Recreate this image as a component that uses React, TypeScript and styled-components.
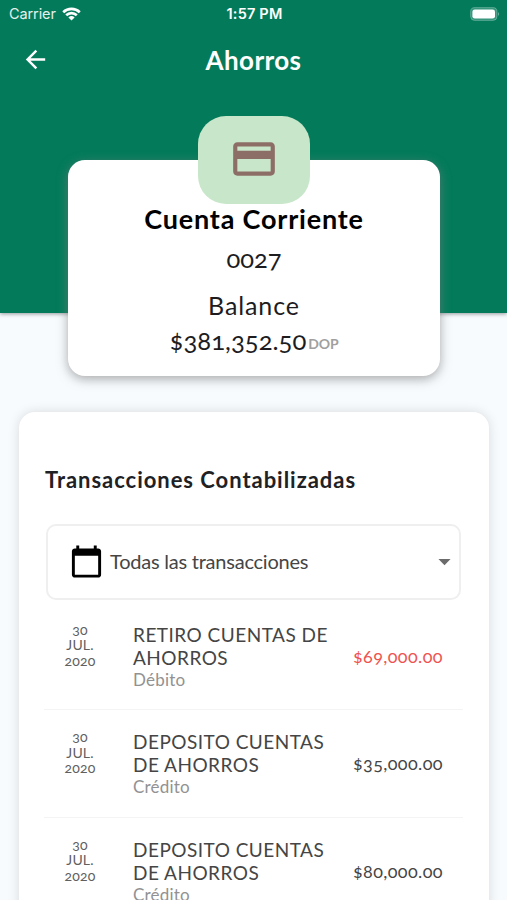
import React from "react";
import styled, { createGlobalStyle } from "styled-components";
import { MdArrowBack, MdArrowDropDown, MdCalendarToday, MdCreditCard } from "react-icons/md";

const GlobalStyle = createGlobalStyle`
  * { box-sizing: border-box; }
  body {
    margin: 0;
    height: 900px;
    overflow: hidden;
    background: #f7fbfe;
    font-family: Lato, "Open Sans", sans-serif;
    font-variant-numeric: oldstyle-nums;
    color: #1d1d1f;
  }
`;

const Screen = styled.main`
  width: 507px;
  height: 900px;
  overflow: hidden;
`;

const Hero = styled.header`
  height: 313px;
  background: #037b5b;
  color: #fff;
  box-shadow: 0 1px 4px rgba(0, 0, 0, 0.4);
`;

const StatusBar = styled.div`
  height: 28px;
  padding: 0 7px 0 9px;
  display: grid;
  grid-template-columns: 1fr auto 1fr;
  align-items: center;
  font: 400 14.5px/28px Inter, sans-serif;
`;

const Carrier = styled.div`
  display: flex;
  align-items: center;
  gap: 6px;
  letter-spacing: -0.1px;
  color: #e3f0ec;
`;

const Clock = styled.div`
  font-weight: 600;
  font-size: 14.5px;
  letter-spacing: 0.2px;
`;

const Battery = styled.svg`
  justify-self: end;
  margin-bottom: 1px;
`;

const AppBar = styled.div`
  height: 63px;
  padding: 0 21px;
  display: grid;
  grid-template-columns: 29px 1fr 29px;
  align-items: center;
`;

const ScreenTitle = styled.h1`
  margin: 0;
  text-align: center;
  font-size: 26px;
  line-height: 32px;
  font-weight: 700;
  letter-spacing: 0.4px;
`;

const AccountCard = styled.section`
  position: relative;
  width: 372px;
  height: 216px;
  margin: -153px 0 0 68px;
  padding-top: 39px;
  border-radius: 17px;
  background: #fff;
  text-align: center;
  box-shadow: 0 3px 11px rgba(125, 125, 125, 0.65);
`;

const Badge = styled.div`
  position: absolute;
  top: -44.5px;
  left: 130px;
  width: 112px;
  height: 88px;
  padding-bottom: 1px;
  border-radius: 28px;
  background: #c8e6c9;
  color: #8d6e67;
  display: flex;
  align-items: center;
  justify-content: center;
`;

const AccountName = styled.h2`
  margin: 0;
  font-size: 27px;
  line-height: 40px;
  font-weight: 700;
  letter-spacing: 0.8px;
  color: #000;
  position: relative;
`;

const AccountNumber = styled.div`
  font-size: 25.5px;
  line-height: 39px;
`;

const BalanceLabel = styled.div`
  margin-top: 9px;
  font-size: 25px;
  line-height: 36px;
  letter-spacing: 0.9px;
`;

const Balance = styled.div`
  font-size: 25.7px;
  line-height: 35px;
`;

const Currency = styled.span`
  position: relative;
  top: -1.5px;
  margin-left: 2px;
  font-size: 14px;
  font-weight: 700;
  letter-spacing: -0.2px;
  color: #a0a0a0;
`;

const Panel = styled.section`
  width: 470px;
  height: 520px;
  margin: 36px 0 0 19px;
  padding: 54px 26px 0 25px;
  border-radius: 16px;
  background: #fff;
  box-shadow: 0 0 12px rgba(0, 0, 0, 0.13);
`;

const PanelTitle = styled.h3`
  margin: 0 0 29.5px 1px;
  font-size: 22px;
  line-height: 28px;
  font-weight: 700;
  letter-spacing: 0.96px;
  white-space: nowrap;
  color: #202124;
`;

const Filter = styled.button`
  width: 415px;
  height: 76px;
  margin: 0 0 3px 2px;
  padding: 0 0 1px 21px;
  display: flex;
  align-items: center;
  border: 2px solid #efefef;
  border-radius: 10px;
  background: #fff;
  color: #000;
  font: 400 20px/28px Lato, sans-serif;
`;

const FilterText = styled.span`
  flex: 1;
  margin-left: 6px;
  text-align: left;
  letter-spacing: -0.23px;
  color: #454545;
`;

const List = styled.ul`
  margin: 0;
  padding: 0;
  list-style: none;
`;

const Row = styled.li`
  height: 107.5px;
  padding: 20px 20px 0 14px;
  display: grid;
  grid-template-columns: 44px 31px 1fr auto;
  border-bottom: 1px solid #f4f4f4;
`;

const DateColumn = styled.div`
  display: flex;
  flex-direction: column;
  align-items: center;
  margin-top: -1px;
  font-size: 14px;
  line-height: 15.6px;
  letter-spacing: 0.15px;
  color: #606060;
`;

const Details = styled.div`
  grid-column: 3;
  white-space: nowrap;
`;

const Description = styled.div`
  font-size: 19px;
  line-height: 23px;
  letter-spacing: 0.48px;
  color: #454545;
`;

const Kind = styled.div`
  font-size: 17px;
  line-height: 21px;
  letter-spacing: 0.2px;
  color: #929292;
`;

const Amount = styled.div<{ $debit?: boolean }>`
  margin-top: 23px;
  font-size: 18px;
  line-height: 20px;
  letter-spacing: 0.4px;
  color: ${(p) => (p.$debit ? "#ef5350" : "#454545")};
`;

type Transaction = { lines: string[]; kind: string; amount: string; debit?: boolean };

const transactions: Transaction[] = [
  { lines: ["RETIRO CUENTAS DE", "AHORROS"], kind: "Débito", amount: "$69,000.00", debit: true },
  { lines: ["DEPOSITO CUENTAS", "DE AHORROS"], kind: "Crédito", amount: "$35,000.00" },
  { lines: ["DEPOSITO CUENTAS", "DE AHORROS"], kind: "Crédito", amount: "$80,000.00" },
];

export default function App() {
  return (
    <Screen>
      <GlobalStyle />
      <Hero>
        <StatusBar>
          <Carrier>
            Carrier
            <svg width="19" height="14" viewBox="0 0 19 14" fill="none" stroke="#fff" strokeWidth="2.6">
              <path d="M1.2 5.2a12 12 0 0 1 16.6 0M4.2 8.3a7.6 7.6 0 0 1 10.6 0" />
              <path d="M9.5 13.6 6.4 10.4a4.5 4.5 0 0 1 6.2 0Z" fill="#fff" stroke="none" />
            </svg>
          </Carrier>
          <Clock>1:57 PM</Clock>
          <Battery width="30" height="14" viewBox="0 0 30 14">
            <rect x="0.6" y="0.6" width="26.4" height="12.8" rx="4" fill="#fff" fillOpacity="0.2" stroke="#fff" strokeOpacity="0.25" />
            <rect x="2.4" y="2.4" width="22.6" height="9.2" rx="2.4" fill="#fff" />
            <path d="M28 4.8q1.8 2.2 0 4.4Z" fill="#fff" fillOpacity="0.5" />
          </Battery>
        </StatusBar>
        <AppBar>
          <MdArrowBack size={29} />
          <ScreenTitle>Ahorros</ScreenTitle>
        </AppBar>
      </Hero>

      <AccountCard>
        <Badge>
          <MdCreditCard size={50} />
        </Badge>
        <AccountName>Cuenta Corriente</AccountName>
        <AccountNumber>0027</AccountNumber>
        <BalanceLabel>Balance</BalanceLabel>
        <Balance>
          $381,352.50<Currency>DOP</Currency>
        </Balance>
      </AccountCard>

      <Panel>
        <PanelTitle>Transacciones Contabilizadas</PanelTitle>
        <Filter>
          <MdCalendarToday size={35} />
          <FilterText>Todas las transacciones</FilterText>
          <MdArrowDropDown size={29} color="#6b6b6b" />
        </Filter>
        <List>
          {transactions.map((t, i) => (
            <Row key={i}>
              <DateColumn>
                <span>30</span>
                <span>JUL.</span>
                <span>2020</span>
              </DateColumn>
              <Details>
                {t.lines.map((line) => (
                  <Description key={line}>{line}</Description>
                ))}
                <Kind>{t.kind}</Kind>
              </Details>
              <Amount $debit={t.debit}>{t.amount}</Amount>
            </Row>
          ))}
        </List>
      </Panel>
    </Screen>
  );
}
